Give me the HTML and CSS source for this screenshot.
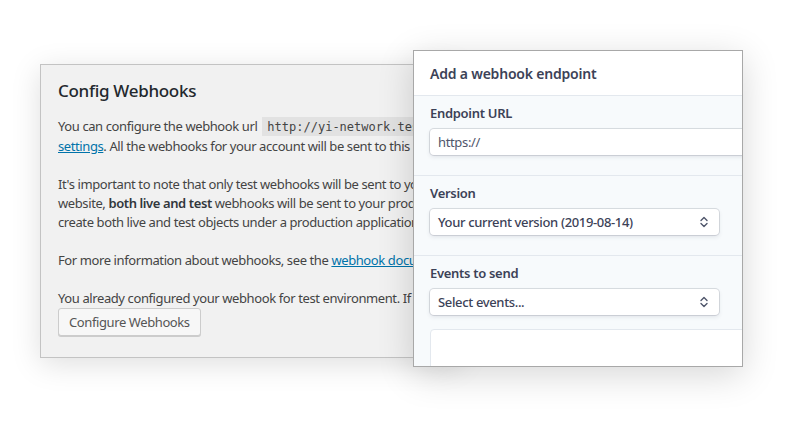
FILE: index.html
```html
<!DOCTYPE html>
<html lang="en">
<head>
<meta charset="utf-8">
<title>Config Webhooks</title>
<link rel="stylesheet" href="styles.css">
</head>
<body>
<div class="stage">
  <section class="config">
    <h2 class="config-title">Config Webhooks</h2>
    <p class="para">You can configure the webhook url <code class="code">http://yi-network.test/?wc-api=wc_stripe</code> in your Stripe webhook<br><a class="link" href="#">settings</a>. All the webhooks for your account will be sent to this endpoint.</p>
    <p class="para">It's important to note that only test webhooks will be sent to your development webhook url. Yet, if you use a live<br>website, <strong>both live and test</strong> webhooks will be sent to your production webhook URL. This is because you can<br>create both live and test objects under a production application.</p>
    <p class="para">For more information about webhooks, see the <a class="link" href="#">webhook documentation</a>.</p>
    <p class="para para-last">You already configured your webhook for test environment. If you want to reconfigure it, click the button below.</p>
    <button class="wp-button" type="button">Configure Webhooks</button>
  </section>

  <section class="endpoint">
    <header class="endpoint-head">Add a webhook endpoint</header>
    <div class="field">
      <div class="field-label">Endpoint URL</div>
      <div class="control control-wide">https://</div>
    </div>
    <div class="field">
      <div class="field-label">Version</div>
      <div class="control control-select">
        <span>Your current version (2019-08-14)</span>
        <svg class="chev" width="8" height="12" viewBox="0 0 8 12" aria-hidden="true"><path d="M1 4.5 L4 1.5 L7 4.5 M1 7.5 L4 10.5 L7 7.5" fill="none" stroke="#4f566b" stroke-width="1.4" stroke-linecap="round" stroke-linejoin="round"/></svg>
      </div>
    </div>
    <div class="field field-last">
      <div class="field-label">Events to send</div>
      <div class="control control-select">
        <span>Select events...</span>
        <svg class="chev" width="8" height="12" viewBox="0 0 8 12" aria-hidden="true"><path d="M1 4.5 L4 1.5 L7 4.5 M1 7.5 L4 10.5 L7 7.5" fill="none" stroke="#4f566b" stroke-width="1.4" stroke-linecap="round" stroke-linejoin="round"/></svg>
      </div>
      <div class="events-box"></div>
    </div>
  </section>
</div>
</body>
</html>
```

FILE: styles.css
```css
* { box-sizing: border-box; }

html, body {
  margin: 0;
  background: #ffffff;
}

body {
  width: 792px;
  height: 432px;
  overflow: hidden;
}

.stage {
  display: flex;
  align-items: flex-start;
  padding: 50px 0 0 40px;
}

/* Left: WordPress style settings card */
.config {
  flex: none;
  width: 420px;
  height: 294px;
  margin-top: 14px;
  padding: 14px 0 0 17px;
  background: #f1f1f1;
  border: 1px solid #c3c3c3;
  box-shadow: 0 6px 28px rgba(0, 0, 0, 0.13);
  overflow: hidden;
  font-family: "Noto Sans", "Open Sans", sans-serif;
  font-size: 13px;
  color: #444444;
}

.config-title {
  margin: 0;
  font-size: 17px;
  line-height: 24px;
  font-weight: 500;
  color: #23282d;
  letter-spacing: -0.3px;
}

.para {
  margin: 14px 0 19px;
  line-height: 19px;
  white-space: nowrap;
  letter-spacing: -0.4px;
}

.para + .para { margin-top: 0; }

.para-last { margin-bottom: 0; }

.code {
  font-family: "DejaVu Sans Mono", "Liberation Mono", monospace;
  font-size: 12px;
  padding: 3px 5px 2px;
  margin-left: 2px;
  background: #e2e2e2;
  color: #444444;
  letter-spacing: 0;
}

.link {
  color: #0073aa;
  text-decoration: underline;
}

.para strong {
  font-weight: 600;
  color: #32373c;
}

.wp-button {
  display: block;
  height: 28px;
  padding: 0 10px;
  font-family: "Noto Sans", "Open Sans", sans-serif;
  font-size: 13px;
  letter-spacing: -0.4px;
  color: #555555;
  background: #f7f7f7;
  border: 1px solid #cccccc;
  border-radius: 3px;
  box-shadow: 0 1px 0 #cccccc;
}

/* Right: Stripe style endpoint dialog */
.endpoint {
  flex: none;
  z-index: 1;
  width: 330px;
  height: 317px;
  margin-left: -47px;
  background: #f7fafc;
  border: 1px solid #a8a8a8;
  box-shadow: 0 8px 34px rgba(0, 0, 0, 0.16);
  overflow: hidden;
  font-family: "Noto Sans", "Open Sans", sans-serif;
  font-size: 13px;
  color: #3c4257;
}

.endpoint-head {
  display: flex;
  align-items: center;
  height: 45px;
  padding: 0 16px;
  background: #ffffff;
  border-bottom: 1px solid #e3e8ee;
  font-size: 14px;
  font-weight: 600;
  color: #3c4257;
  letter-spacing: -0.2px;
}

.field {
  padding: 7px 0 20px 16px;
  border-bottom: 1px solid #e3e8ee;
}

.field-last {
  border-bottom: none;
  padding-bottom: 0;
}

.field-label {
  line-height: 20px;
  margin-bottom: 6px;
  font-weight: 600;
  color: #3c4257;
  letter-spacing: -0.3px;
}

.control {
  display: flex;
  align-items: center;
  justify-content: space-between;
  height: 26px;
  padding: 0 8px;
  background: #ffffff;
  border-radius: 4px;
  box-shadow: 0 0 0 1px rgba(60, 66, 87, 0.16), 0 2px 4px rgba(60, 66, 87, 0.12);
  color: #3c4257;
  letter-spacing: -0.35px;
}

.control-wide {
  width: 340px;
  color: #4f566b;
}

.control-select {
  width: 289px;
  font-weight: 500;
  padding-right: 11px;
}

.chev { flex: none; }

.events-box {
  width: 340px;
  height: 60px;
  margin-top: 14px;
  background: #ffffff;
  border: 1px solid #e3e8ee;
  border-radius: 4px;
}
```
